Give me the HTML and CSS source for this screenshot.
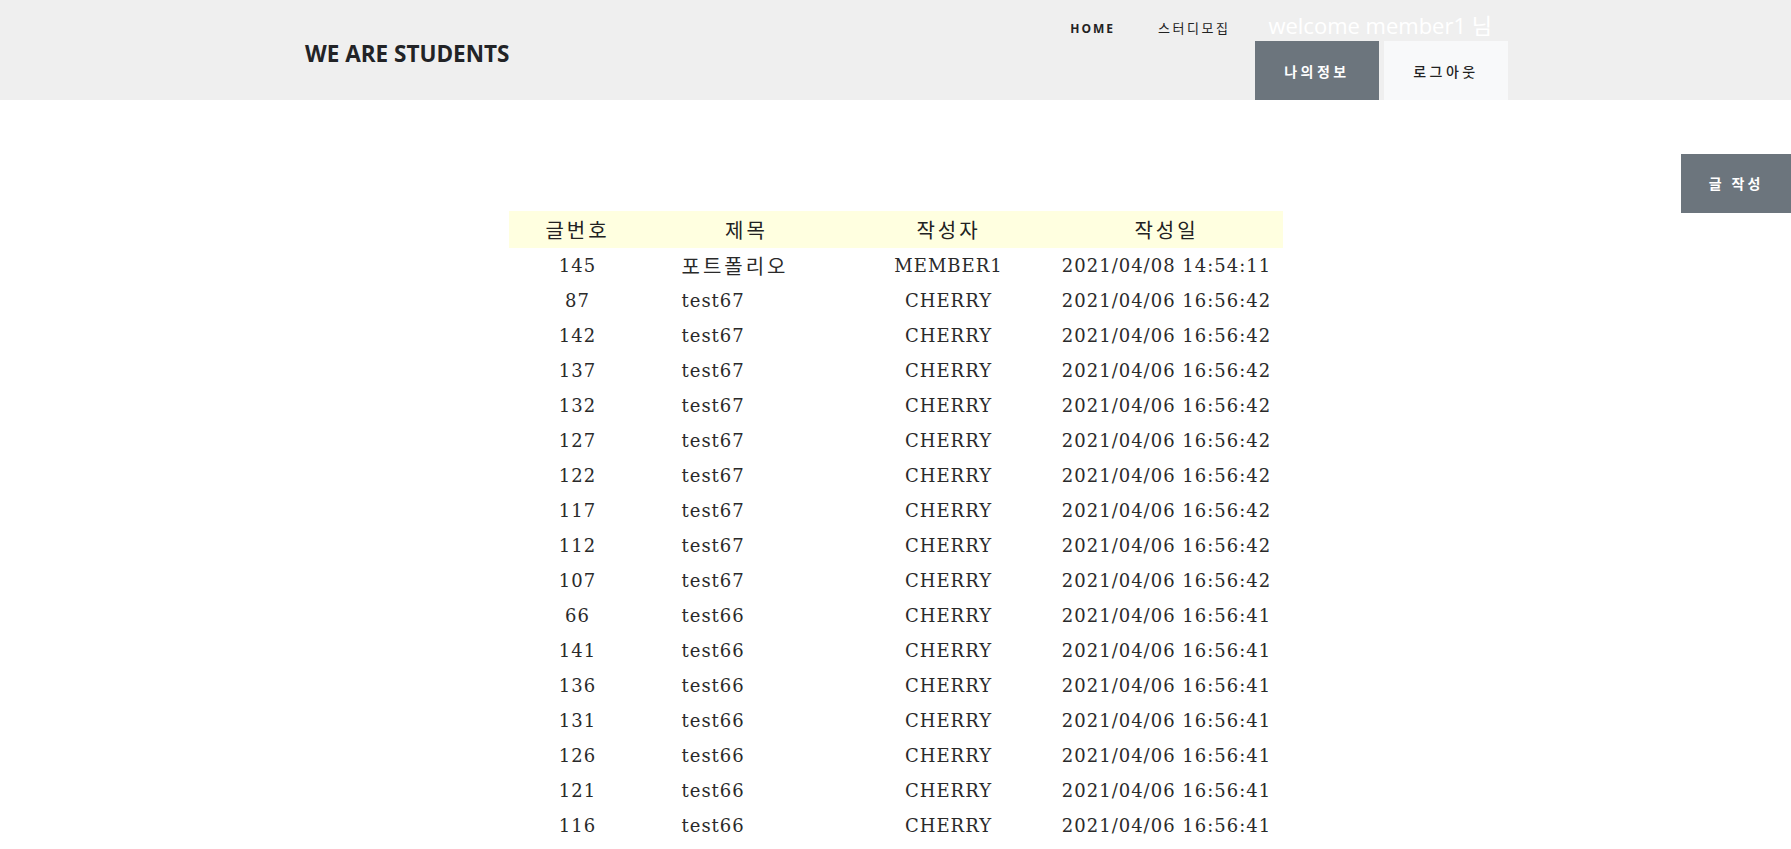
FILE: index.html
```html
<!DOCTYPE html>
<html lang="ko">
<head>
<meta charset="utf-8">
<title>WE ARE STUDENTS</title>
<link rel="stylesheet" href="styles.css">
</head>
<body>
<header class="site-header">
  <div class="header-inner">
    <a class="logo" href="#">WE ARE STUDENTS</a>
    <div class="header-right">
      <nav class="top-nav">
        <a class="nav-home" href="#">HOME</a>
        <a class="nav-study" href="#">스터디모집</a>
        <span class="welcome">welcome member1 님</span>
      </nav>
      <div class="account-btns">
        <a class="btn btn-dark" href="#">나의정보</a>
        <a class="btn btn-light" href="#">로그아웃</a>
      </div>
    </div>
  </div>
</header>
<main class="board">
  <div class="write-row">
    <a class="btn btn-dark btn-write" href="#">글 작성</a>
  </div>
  <table class="board-table">
    <colgroup>
      <col class="c-no"><col class="c-title"><col class="c-writer"><col class="c-date">
    </colgroup>
    <thead>
      <tr><th>글번호</th><th>제목</th><th>작성자</th><th>작성일</th></tr>
    </thead>
    <tbody>
      <tr><td>145</td><td class="title ko">포트폴리오</td><td>MEMBER1</td><td>2021/04/08 14:54:11</td></tr>
      <tr><td>87</td><td class="title">test67</td><td>CHERRY</td><td>2021/04/06 16:56:42</td></tr>
      <tr><td>142</td><td class="title">test67</td><td>CHERRY</td><td>2021/04/06 16:56:42</td></tr>
      <tr><td>137</td><td class="title">test67</td><td>CHERRY</td><td>2021/04/06 16:56:42</td></tr>
      <tr><td>132</td><td class="title">test67</td><td>CHERRY</td><td>2021/04/06 16:56:42</td></tr>
      <tr><td>127</td><td class="title">test67</td><td>CHERRY</td><td>2021/04/06 16:56:42</td></tr>
      <tr><td>122</td><td class="title">test67</td><td>CHERRY</td><td>2021/04/06 16:56:42</td></tr>
      <tr><td>117</td><td class="title">test67</td><td>CHERRY</td><td>2021/04/06 16:56:42</td></tr>
      <tr><td>112</td><td class="title">test67</td><td>CHERRY</td><td>2021/04/06 16:56:42</td></tr>
      <tr><td>107</td><td class="title">test67</td><td>CHERRY</td><td>2021/04/06 16:56:42</td></tr>
      <tr><td>66</td><td class="title">test66</td><td>CHERRY</td><td>2021/04/06 16:56:41</td></tr>
      <tr><td>141</td><td class="title">test66</td><td>CHERRY</td><td>2021/04/06 16:56:41</td></tr>
      <tr><td>136</td><td class="title">test66</td><td>CHERRY</td><td>2021/04/06 16:56:41</td></tr>
      <tr><td>131</td><td class="title">test66</td><td>CHERRY</td><td>2021/04/06 16:56:41</td></tr>
      <tr><td>126</td><td class="title">test66</td><td>CHERRY</td><td>2021/04/06 16:56:41</td></tr>
      <tr><td>121</td><td class="title">test66</td><td>CHERRY</td><td>2021/04/06 16:56:41</td></tr>
      <tr><td>116</td><td class="title">test66</td><td>CHERRY</td><td>2021/04/06 16:56:41</td></tr>
      <tr><td>111</td><td class="title">test66</td><td>CHERRY</td><td>2021/04/06 16:56:41</td></tr>
    </tbody>
  </table>
</main>
</body>
</html>
```

FILE: styles.css
```css
html, body {
  margin: 0;
  padding: 0;
}
body {
  background: #ffffff;
  color: #222222;
  font-family: "Open Sans", "Noto Sans CJK KR", sans-serif;
  overflow: hidden;
  height: 849px;
}
a {
  text-decoration: none;
  color: inherit;
}

/* header */
.site-header {
  background: #efefef;
  height: 100px;
}
.header-inner {
  display: flex;
  justify-content: space-between;
  height: 100px;
  padding: 0 283px 0 305px;
}
.logo {
  font-family: "Open Sans", sans-serif;
  font-weight: 700;
  font-size: 22.5px;
  color: #222326;
  align-self: center;
  margin-top: 7px;
}
.header-right {
  display: flex;
  flex-direction: column;
  align-items: flex-end;
}
.top-nav {
  display: flex;
  align-items: center;
  height: 41px;
  padding-right: 16px;
}
.nav-home {
  font-family: "Open Sans", sans-serif;
  font-weight: 700;
  font-size: 12px;
  letter-spacing: 2px;
  color: #222;
  margin-right: 43px;
  padding-top: 15px;
}
.nav-study {
  font-family: "Noto Sans CJK KR", sans-serif;
  font-size: 13px;
  letter-spacing: 2.5px;
  color: #222;
  margin-right: 38px;
  padding-top: 14px;
}
.welcome {
  font-family: "Open Sans", "Noto Sans CJK KR", sans-serif;
  font-size: 22px;
  color: #ffffff;
  padding-top: 6px;
}
.account-btns {
  display: flex;
  gap: 5px;
}
.btn {
  display: flex;
  align-items: center;
  justify-content: center;
  font-family: "Noto Sans CJK KR", sans-serif;
  font-size: 14px;
  font-weight: 700;
  letter-spacing: 3.5px;
  height: 59px;
}
.account-btns .btn {
  width: 124px;
}
.btn-dark {
  background: #6c757d;
  color: #ffffff;
}
.btn-light {
  background: #f8f9fa;
  color: #222;
  font-weight: 500;
}

/* board */
.board {
  padding-top: 54px;
}
.write-row {
  display: flex;
  justify-content: flex-end;
}
.btn-write {
  width: 110px;
  letter-spacing: 3px;
  padding-bottom: 2px;
  box-sizing: border-box;
}
.board-table {
  margin: -2px auto 0;
  width: 774px;
  border-collapse: collapse;
  table-layout: fixed;
}
.c-no { width: 138px; }
.c-title { width: 200px; }
.c-writer { width: 204px; }
.c-date { width: 232px; }
.board-table thead tr {
  background: #ffffe0;
}
.board-table th {
  font-family: "Noto Sans CJK KR", sans-serif;
  font-weight: 400;
  font-size: 20px;
  letter-spacing: 3px;
  color: #222;
  height: 37px;
  padding: 0;
  text-align: center;
}
.board-table td {
  font-family: "DejaVu Serif", serif;
  font-size: 18px;
  letter-spacing: 1px;
  color: #2a2a2a;
  height: 35px;
  padding: 0;
  text-align: center;
  white-space: nowrap;
}
.board-table td.title {
  text-align: left;
  padding-left: 35px;
}
.board-table td.ko {
  font-family: "Noto Sans CJK KR", sans-serif;
  font-size: 20px;
  letter-spacing: 3px;
}
```
